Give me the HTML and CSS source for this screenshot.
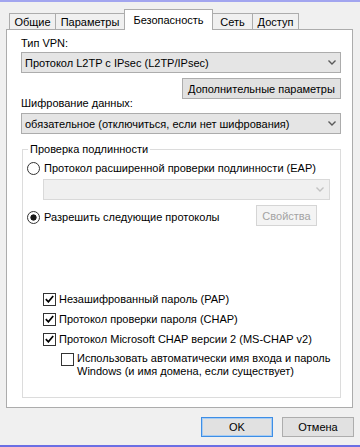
FILE: index.html
```html
<!DOCTYPE html>
<html lang="ru">
<head>
    <meta charset="UTF-8">
    <meta name="viewport" content="width=device-width, initial-scale=1.0">
    <title>Свойства VPN-подключения</title>
    <link rel="stylesheet" href="styles.css">
</head>
<body>

<div class="dialog">
    <div class="tabs">
        <div class="tab tab-general">Общие</div>
        <div class="tab tab-options">Параметры</div>
        <div class="tab tab-security active">Безопасность</div>
        <div class="tab tab-network">Сеть</div>
        <div class="tab tab-sharing">Доступ</div>
    </div>

    <div class="panel">
        <div class="label">Тип VPN:</div>
        <div class="combo">
            <span>Протокол L2TP с IPsec (L2TP/IPsec)</span>
            <svg class="chevron" width="8" height="5" viewBox="0 0 8 5"><polyline points="0.5,0.5 4,4 7.5,0.5" /></svg>
        </div>
        <div class="actions">
            <div class="btn btn-wide">Дополнительные параметры</div>
        </div>

        <div class="label label-tight">Шифрование данных:</div>
        <div class="combo combo-second">
            <span>обязательное (отключиться, если нет шифрования)</span>
            <svg class="chevron" width="8" height="5" viewBox="0 0 8 5"><polyline points="0.5,0.5 4,4 7.5,0.5" /></svg>
        </div>

        <fieldset class="group">
            <legend>Проверка подлинности</legend>

            <div class="option">
                <span class="radio"></span>
                <span>Протокол расширенной проверки подлинности (EAP)</span>
            </div>
            <div class="combo combo-disabled">
                <span></span>
                <svg class="chevron" width="8" height="5" viewBox="0 0 8 5"><polyline points="0.5,0.5 4,4 7.5,0.5" /></svg>
            </div>

            <div class="option-row">
                <div class="option option-inline">
                    <span class="radio checked"></span>
                    <span>Разрешить следующие протоколы</span>
                </div>
                <div class="btn btn-disabled">Свойства</div>
            </div>

            <div class="checks">
                <div class="check-row">
                    <span class="check"><svg width="9" height="8" viewBox="0 0 9 8"><path d="M0.8 4.2 L3.4 6.8 L8.2 1" /></svg></span>
                    <span>Незашифрованный пароль (PAP)</span>
                </div>
                <div class="check-row">
                    <span class="check"><svg width="9" height="8" viewBox="0 0 9 8"><path d="M0.8 4.2 L3.4 6.8 L8.2 1" /></svg></span>
                    <span>Протокол проверки пароля (CHAP)</span>
                </div>
                <div class="check-row">
                    <span class="check"><svg width="9" height="8" viewBox="0 0 9 8"><path d="M0.8 4.2 L3.4 6.8 L8.2 1" /></svg></span>
                    <span>Протокол Microsoft CHAP версии 2 (MS-CHAP v2)</span>
                </div>
                <div class="check-row check-nested">
                    <span class="check"></span>
                    <span class="check-text">Использовать автоматически имя входа и пароль<br>Windows (и имя домена, если существует)</span>
                </div>
            </div>
        </fieldset>
    </div>

    <div class="footer">
        <div class="btn btn-footer btn-default">OK</div>
        <div class="btn btn-footer">Отмена</div>
    </div>
</div>

</body>
</html>
```

FILE: styles.css
```css
* {
    box-sizing: border-box;
}
body {
    margin: 0;
    font-family: "Liberation Sans", Arial, sans-serif;
    font-size: 11px;
    color: #000;
    background-color: #f0f0f0;
}
.dialog {
    height: 447px;
    border-top: 2px solid #a2a5ef;
    border-bottom: 2px solid #6b6fe4;
    padding: 7px 7px 0 6px;
}

/* tabs */
.tabs {
    display: flex;
    align-items: flex-end;
    height: 21px;
    padding-left: 3px;
}
.tab {
    height: 16px;
    margin-bottom: 1px;
    margin-left: -1px;
    border: 1px solid #acacac;
    border-bottom: none;
    background-color: #f0f0f0;
    display: flex;
    align-items: center;
    justify-content: center;
    line-height: 14px;
}
.tab:first-child {
    margin-left: 0;
}
.tab.active {
    height: 21px;
    margin-bottom: 0;
    background-color: #fff;
    position: relative;
    z-index: 1;
}
.tab-general { width: 47px; }
.tab-options { width: 70px; }
.tab-security { width: 89px; }
.tab-network { width: 41px; }
.tab-sharing { width: 47px; }

/* page */
.panel {
    margin-top: -1px;
    background-color: #fff;
    border: 1px solid #acacac;
    padding: 6px 11px 9px 14px;
}
.label {
    line-height: 14px;
}
.label-tight {
    margin-top: -3px;
}
.combo {
    margin-top: 2px;
    height: 21px;
    border: 1px solid #acacac;
    background-color: #e5e5e5;
    display: flex;
    align-items: center;
    justify-content: space-between;
    padding: 0 4px 0 3px;
    white-space: nowrap;
}
.combo-second {
    margin-top: 3px;
}
.chevron polyline {
    fill: none;
    stroke: #5a5a5a;
    stroke-width: 1.4;
}
.combo-disabled {
    margin: 3px 0 0 16px;
    width: 287px;
    background-color: #f0f0f0;
    border-color: #d9d9d9;
    padding-right: 5px;
}
.combo-disabled .chevron polyline {
    stroke: #c2c2c2;
}
.actions {
    display: flex;
    justify-content: flex-end;
    margin-top: 5px;
}
.btn {
    height: 21px;
    border: 1px solid #adadad;
    background-color: #e1e1e1;
    display: flex;
    align-items: center;
    justify-content: center;
    white-space: nowrap;
}
.btn-wide {
    width: 159px;
}
.btn-disabled {
    width: 61px;
    margin-right: 23px;
    background-color: #f4f4f4;
    border-color: #d5d5d5;
    color: #a3a3a3;
}

/* group box */
.group {
    margin: 8px 0 0 1px;
    padding: 4px 0 19px 4px;
    border: 1px solid #dcdcdc;
    min-width: 0;
}
.group legend {
    margin-left: 1px;
    padding: 0 2px;
    line-height: 14px;
}
.option {
    display: flex;
    align-items: center;
    gap: 4px;
    height: 16px;
    white-space: nowrap;
}
.option-row {
    display: flex;
    justify-content: space-between;
    align-items: flex-start;
    margin-top: 5px;
}
.option-inline {
    margin-top: 4px;
}
.radio {
    width: 13px;
    height: 13px;
    flex: none;
    border: 1px solid #333;
    border-radius: 50%;
    background-color: #fff;
}
.radio.checked {
    background: radial-gradient(circle, #1a1a1a 2.8px, #fff 3.4px);
}
.checks {
    margin-top: 63px;
}
.check-row {
    display: flex;
    align-items: center;
    gap: 3px;
    height: 20px;
    margin-left: 16px;
    white-space: nowrap;
}
.check {
    width: 13px;
    height: 13px;
    flex: none;
    border: 1px solid #333;
    background-color: #fff;
    display: flex;
    align-items: center;
    justify-content: center;
}
.check path {
    fill: none;
    stroke: #000;
    stroke-width: 1.7;
}
.check-nested {
    margin: 3px 0 0 34px;
    height: auto;
    align-items: flex-start;
}
.check-nested .check {
    margin-top: 1px;
}
.check-text {
    line-height: 13px;
}

/* buttons at the bottom */
.footer {
    display: flex;
    justify-content: flex-end;
    gap: 9px;
    margin: 9px -1px 0 0;
}
.btn-footer {
    width: 72px;
    height: 20px;
}
.btn-default {
    border-color: #3d8ee6;
    box-shadow: inset 0 0 0 1px #a8cdf3;
}
```
